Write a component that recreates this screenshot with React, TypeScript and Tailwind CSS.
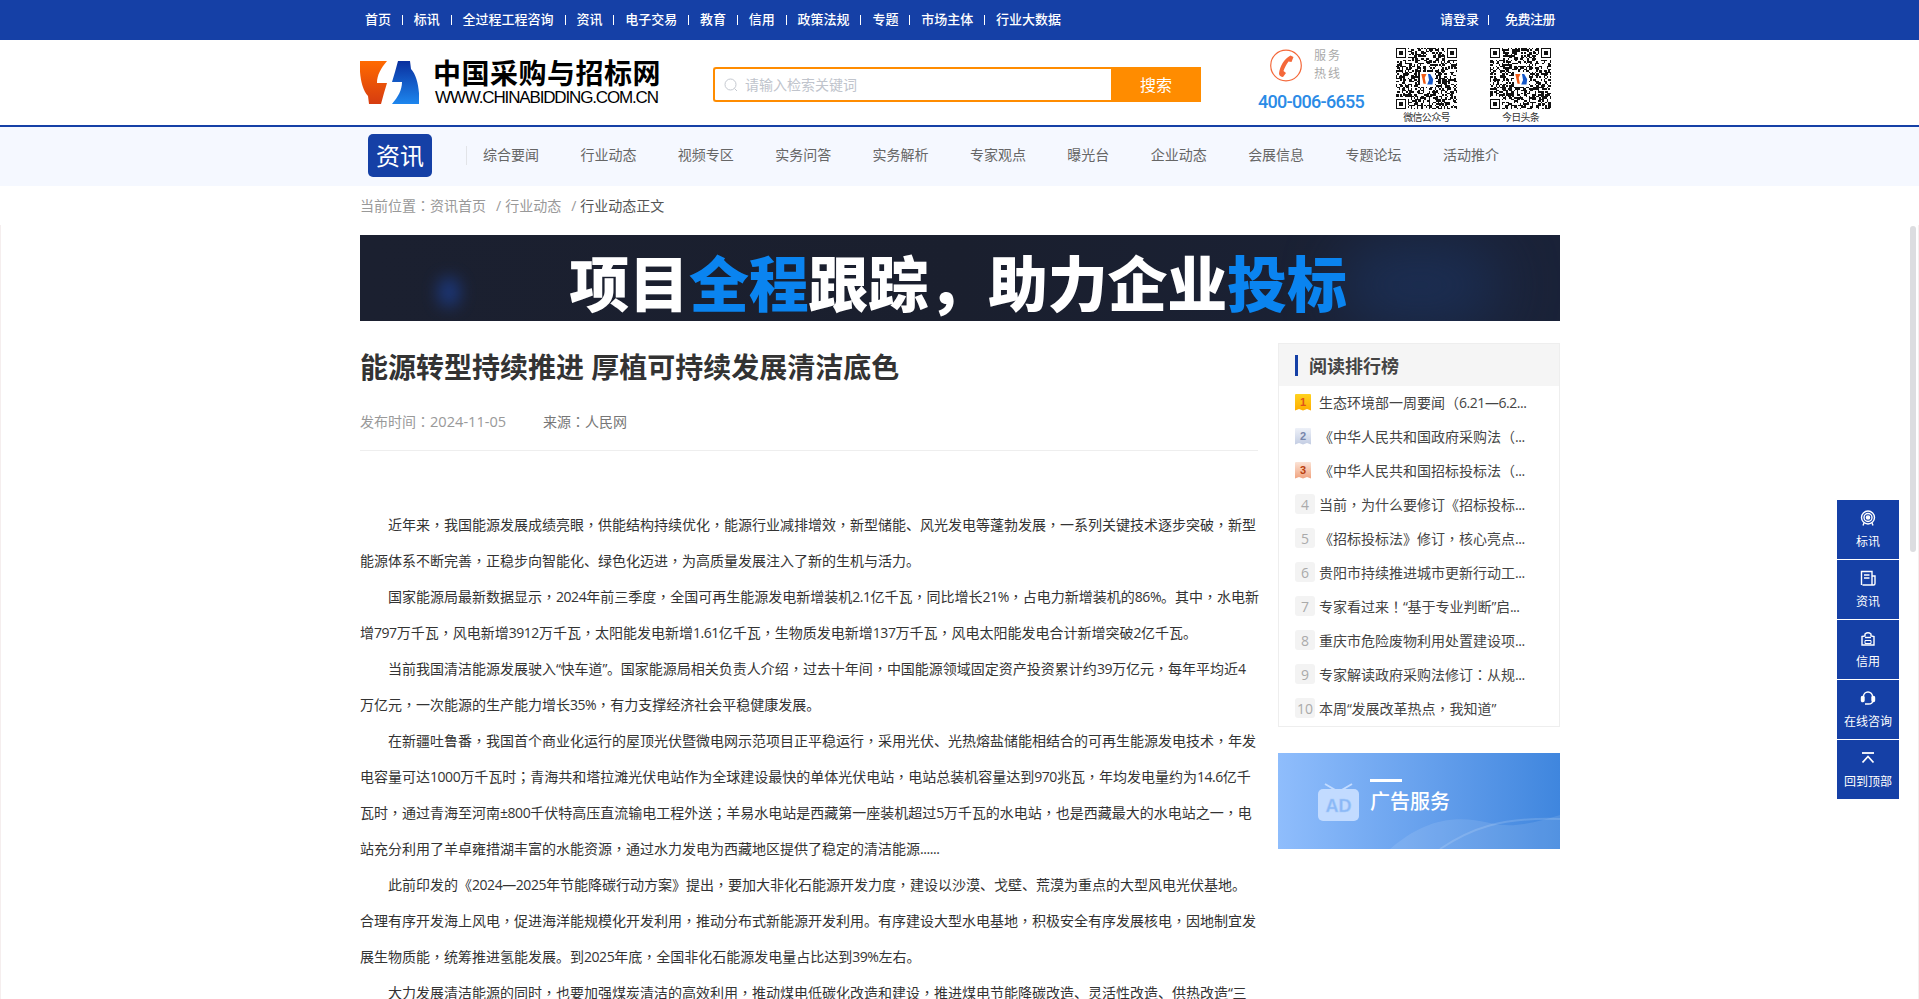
const F = "font-['Open_Sans','Noto_Sans_CJK_SC',sans-serif]";

const topNav = ["首页","标讯","全过程工程咨询","资讯","电子交易","教育","信用","政策法规","专题","市场主体","行业大数据"];
const subNav = ["综合要闻","行业动态","视频专区","实务问答","实务解析","专家观点","曝光台","企业动态","会展信息","专题论坛","活动推介"];
const ranking = [
  "生态环境部一周要闻（6.21—6.2...",
  "《中华人民共和国政府采购法（...",
  "《中华人民共和国招标投标法（...",
  "当前，为什么要修订《招标投标...",
  "《招标投标法》修订，核心亮点...",
  "贵阳市持续推进城市更新行动工...",
  "专家看过来！“基于专业判断”启...",
  "重庆市危险废物利用处置建设项...",
  "专家解读政府采购法修订：从规...",
  "本周“发展改革热点，我知道”",
];
const article: [string, boolean][] = [
  ["近年来，我国能源发展成绩亮眼，供能结构持续优化，能源行业减排增效，新型储能、风光发电等蓬勃发展，一系列关键技术逐步突破，新型", true],
  ["能源体系不断完善，正稳步向智能化、绿色化迈进，为高质量发展注入了新的生机与活力。", false],
  ["国家能源局最新数据显示，2024年前三季度，全国可再生能源发电新增装机2.1亿千瓦，同比增长21%，占电力新增装机的86%。其中，水电新", true],
  ["增797万千瓦，风电新增3912万千瓦，太阳能发电新增1.61亿千瓦，生物质发电新增137万千瓦，风电太阳能发电合计新增突破2亿千瓦。", false],
  ["当前我国清洁能源发展驶入“快车道”。国家能源局相关负责人介绍，过去十年间，中国能源领域固定资产投资累计约39万亿元，每年平均近4", true],
  ["万亿元，一次能源的生产能力增长35%，有力支撑经济社会平稳健康发展。", false],
  ["在新疆吐鲁番，我国首个商业化运行的屋顶光伏暨微电网示范项目正平稳运行，采用光伏、光热熔盐储能相结合的可再生能源发电技术，年发", true],
  ["电容量可达1000万千瓦时；青海共和塔拉滩光伏电站作为全球建设最快的单体光伏电站，电站总装机容量达到970兆瓦，年均发电量约为14.6亿千", false],
  ["瓦时，通过青海至河南±800千伏特高压直流输电工程外送；羊易水电站是西藏第一座装机超过5万千瓦的水电站，也是西藏最大的水电站之一，电", false],
  ["站充分利用了羊卓雍措湖丰富的水能资源，通过水力发电为西藏地区提供了稳定的清洁能源......", false],
  ["此前印发的《2024—2025年节能降碳行动方案》提出，要加大非化石能源开发力度，建设以沙漠、戈壁、荒漠为重点的大型风电光伏基地。", true],
  ["合理有序开发海上风电，促进海洋能规模化开发利用，推动分布式新能源开发利用。有序建设大型水电基地，积极安全有序发展核电，因地制宜发", false],
  ["展生物质能，统筹推进氢能发展。到2025年底，全国非化石能源发电量占比达到39%左右。", false],
  ["大力发展清洁能源的同时，也要加强煤炭清洁的高效利用，推动煤电低碳化改造和建设，推进煤电节能降碳改造、灵活性改造、供热改造“三", true],
];

function T({ s }: { s: string }) {
  return (
    <>
      {s.split(/([\x20-\x7e±—“”]+|[，：；！])/).map((part, i) => {
        if (!part) return null;
        if (/^[，：；！]$/.test(part)) return <span key={i} className="font-['Noto_Sans_CJK_TC',sans-serif]">{part}</span>;
        if (i % 2 === 1) return <span key={i} className="tracking-[-0.45px]">{part}</span>;
        return <span key={i}>{part}</span>;
      })}
    </>
  );
}

function Logo() {
  const d = "M0 1 H27 C21 8 17 15 17 23 H27 L24 33 L21 44 H9 L8 36 C2 30 -1 15 0 1Z";
  return (
    <svg width="59" height="45" viewBox="0 0 59 45" className="shrink-0">
      <defs>
        <linearGradient id="lo" x1="0" y1="0" x2="0" y2="1"><stop offset="0" stopColor="#ff6a00" /><stop offset="1" stopColor="#d63c10" /></linearGradient>
        <linearGradient id="lb" x1="0" y1="0" x2="0" y2="1"><stop offset="0" stopColor="#1d86ee" /><stop offset="1" stopColor="#0a2f9e" /></linearGradient>
      </defs>
      <path d={d} fill="url(#lo)" />
      <path d={d} fill="url(#lb)" transform="rotate(180 29.500 22.500)" />
    </svg>
  );
}

function QR({ seed }: { seed: number }) {
  const n = 41;
  const dark = "#111";
  const cells: JSX.Element[] = [];
  let s = seed;
  const inFinder = (x: number, y: number) => (x < 8 && y < 8) || (x >= n - 8 && y < 8) || (x < 8 && y >= n - 8);
  for (let y = 0; y < n; y++) {
    for (let x = 0; x < n; x++) {
      s = (s * 1103515245 + 12345) & 0x7fffffff;
      if (!inFinder(x, y) && ((s >> 16) & 7) < 4) cells.push(<rect key={x + "-" + y} x={x} y={y} width="1" height="1" fill={dark} />);
    }
  }
  const finder = (x: number, y: number) => (
    <g key={x + "_" + y}>
      <rect x={x} y={y} width="7" height="7" fill={dark} />
      <rect x={x + 1} y={y + 1} width="5" height="5" fill="#fff" />
      <rect x={x + 2} y={y + 2} width="3" height="3" fill={dark} />
    </g>
  );
  return (
    <svg width="61" height="61" viewBox="0 0 41 41" shapeRendering="crispEdges">
      <rect width="41" height="41" fill="#fff" />
      {cells}
      {finder(0, 0)}
      {finder(34, 0)}
      {finder(0, 34)}
      <rect x="16" y="16" width="10" height="10" fill="#fff" />
      <path d="M17 17.500h3.500l-1.200 2.500.8 4H18.500z" fill="#f05a14" shapeRendering="auto" />
      <path d="M21.500 17.500h1.500l2 3.500-.5 3.500h-3.500l1.200-3z" fill="#1557c8" shapeRendering="auto" />
    </svg>
  );
}

function Ribbon({ n, from, to, text }: { n: number; from: string; to: string; text: string }) {
  return (
    <svg width="16" height="17" viewBox="0 0 16 17" className="shrink-0">
      <defs>
        <linearGradient id={"r" + n} x1="0" y1="0" x2="0" y2="1"><stop offset="0" stopColor={from} /><stop offset="1" stopColor={to} /></linearGradient>
      </defs>
      <path d="M1 0H15Q16 0 16 1V16.500L12 15L8 16.500L4 15L0 16.500V1Q0 0 1 0Z" fill={"url(#r" + n + ")"} />
      <text x="8" y="11.500" textAnchor="middle" fontSize="11" fontWeight="700" fontFamily="Liberation Sans" fill={text}>{n}</text>
    </svg>
  );
}

function SideIcon({ i }: { i: number }) {
  const p = { fill: "none", stroke: "#fff", strokeWidth: 1.4 };
  if (i === 0)
    return (
      <svg width="16" height="16" viewBox="0 0 16 16" {...p}>
        <circle cx="8" cy="7.500" r="6.500" /><circle cx="8" cy="7.500" r="4" /><circle cx="8" cy="7.500" r="1.600" fill="#fff" />
        <path d="M4 13l-1 2.500M12 13l1 2.500" />
      </svg>
    );
  if (i === 1)
    return (
      <svg width="16" height="16" viewBox="0 0 16 16" {...p}>
        <path d="M1.500 15V1.500H12V15H2.500M12 6H15V13.500Q15 15 13.500 15H12" /><path d="M4 5H9.500M4 8H9.500" />
      </svg>
    );
  if (i === 2)
    return (
      <svg width="16" height="15" viewBox="0 0 16 15" {...p}>
        <path d="M2 5.500L5 5V3Q8 .5 11 3V5L14 5.500V14H2Z" /><path d="M5 6.500H11" /><path d="M5 9.500H11V12.500H5Z" strokeWidth="1" />
      </svg>
    );
  if (i === 3)
    return (
      <svg width="16" height="16" viewBox="0 0 16 16" {...p}>
        <path d="M3.500 8V6.500A4.500 4.500 0 0 1 12.500 6.500V8" />
        <rect x="1.500" y="6.500" width="2.500" height="5" rx="1" fill="#fff" /><rect x="12" y="6.500" width="2.500" height="5" rx="1" fill="#fff" />
        <path d="M5 14H8.500Q12.500 14 12.800 11" />
      </svg>
    );
  return (
    <svg width="16" height="12" viewBox="0 0 16 12" fill="none" stroke="#fff" strokeWidth="1.800">
      <path d="M2 1H14" /><path d="M2.500 10.500L8 4.500L13.500 10.500" />
    </svg>
  );
}

export default function App() {
  return (
    <div className={`${F} h-screen overflow-hidden bg-white flex flex-col`}>
      <div className="shrink-0">
        <div className="h-10 bg-[#1540a6] text-white text-[13px] font-medium">
          <div className="w-[1200px] ml-[360px] h-full flex items-center justify-between pl-[5px] pr-[5px]">
            <div className="flex items-center gap-[10.9px]">
              {topNav.map((t, i) => (
                <div key={t} className="flex items-center gap-[10.9px]">
                  {i > 0 && <span className="w-px h-[10px] bg-white" />}
                  <span>{t}</span>
                </div>
              ))}
            </div>
            <div className="flex items-center">
              <span>请登录</span>
              <span className="w-px h-[10px] bg-white ml-[9px] mr-[16px]" />
              <span className="tracking-[-0.5px]">免费注册</span>
            </div>
          </div>
        </div>

        <div className="h-[85px] flex items-start">
          <div className="w-[1200px] ml-[360px] flex items-start">
            <div className="flex items-start mt-[20px] w-[353px]">
              <Logo />
              <div className="ml-[14px] -mt-[2px] text-black">
                <div className="text-[28px] font-bold leading-[31px] tracking-[0.5px] whitespace-nowrap">中国采购与招标网</div>
                <div className="text-[17px] leading-[18px] tracking-[-1.15px] ml-[2px] font-['Liberation_Sans',sans-serif] whitespace-nowrap">WWW.CHINABIDDING.COM.CN</div>
              </div>
            </div>
            <div className="flex mt-[27px] h-[35px] w-[488px]">
              <div className="flex-1 border-2 border-[#ff8c00] rounded-l-[3px] border-r-0 flex items-center pl-[9px]">
                <svg width="14" height="14" viewBox="0 0 14 14" fill="none" stroke="#c5c9d0" strokeWidth="1"><circle cx="6.500" cy="6.500" r="5.500" /><path d="M10.500 10.500L13 13" /></svg>
                <span className="ml-[7px] text-[14px] text-[#c0c4cc]">请输入检索关键词</span>
              </div>
              <div className="w-[90px] bg-[#ff8c00] text-white text-[16px] flex items-center justify-center">搜索</div>
            </div>
            <div className="ml-[57px] mt-[7px] w-[138px] flex flex-col">
              <div className="flex items-center ml-[12px] gap-[12px]">
                <svg width="32" height="33" viewBox="0 0 32 33" fill="none">
                  <circle cx="16" cy="16.500" r="15.300" stroke="#f4683a" strokeWidth="1.200" />
                  <path d="M20.500 6.500L23.500 8L21.500 13L18.500 12.500C16 16 14.500 19 13.500 22L16 24L13 28C11 28 9 26.500 9 24.500C10 17 14 10 20.500 6.500Z" fill="#f4683a" />
                </svg>
                <div className="text-[12px] leading-[18px] text-[#aaa] tracking-[2px]"><div>服务</div><div>热线</div></div>
              </div>
              <div className="mt-[9px] text-[18px] leading-[20px] font-['Roboto',sans-serif] font-medium tracking-[-0.7px] text-[#2b8be6] whitespace-nowrap">400-006-6655</div>
            </div>
            <div className="mt-[8px] w-[94px] flex flex-col items-start">
              <QR seed={17} />
              <div className="w-[61px] text-center text-[10px] leading-[14px] text-[#333] tracking-[-0.7px] whitespace-nowrap mt-[1px]">微信公众号</div>
            </div>
            <div className="mt-[8px] w-[61px] flex flex-col items-start">
              <QR seed={91} />
              <div className="w-[61px] text-center text-[10px] leading-[14px] text-[#333] tracking-[-0.7px] whitespace-nowrap mt-[1px]">今日头条</div>
            </div>
          </div>
        </div>

        <div className="h-[61px] border-t-2 border-[#1540a6] bg-[#f5f8ff]">
          <div className="w-[1200px] ml-[360px] h-full flex items-center pl-[8px]">
            <div className="w-[64px] h-[43px] -mt-[2px] bg-[#1540a6] rounded-[5px] text-white text-[24px] flex items-center justify-center">资讯</div>
            <div className="w-px h-[19px] bg-[#e2e4e8] ml-[34px] -mt-[2px]" />
            <div className="flex ml-[16px] gap-[41.4px] text-[14px] text-[#666] -mt-[5px] whitespace-nowrap">
              {subNav.map((t) => <span key={t}>{t}</span>)}
            </div>
          </div>
        </div>

        <div className="h-[39px] flex items-center">
          <div className="ml-[360px] text-[14px] text-[#999] flex items-center">
            <span><T s="当前位置：资讯首页" /></span>
            <span className="ml-[10px] mr-[4px]">/</span>
            <span>行业动态</span>
            <span className="ml-[10px] mr-[4px]">/</span>
            <span className="text-[#555]">行业动态正文</span>
          </div>
        </div>
      </div>

      <div className="flex-1 min-h-0 overflow-hidden border-l border-r border-[#f5eeee]">
        <div className="w-[1200px] ml-[359px] pt-[10px]">
          <div className="relative h-[86px] bg-gradient-to-r from-[#1b2030] via-[#1a1f2e] to-[#1a2238] flex items-center justify-center text-white text-[60px] leading-[60px] font-black tracking-[-0.2px] whitespace-nowrap pr-[4px] pt-[12px]">
            <div className="absolute inset-0 overflow-hidden">
              <div className="absolute left-[78px] top-[42px] w-[22px] h-[30px] rounded-full bg-[#1d46a8] blur-[8px] opacity-60" />
              <div className="absolute right-[60px] top-[10px] w-[160px] h-[80px] rounded-full bg-[#1c3768] blur-[30px] opacity-60" />
            </div>
            <span className="relative">项目<span className="text-[#0a84f0]">全程</span>跟踪，助力企业<span className="text-[#0a84f0]">投标</span></span>
          </div>

          <div className="flex justify-between mt-[22px]">
            <div className="w-[898px]">
              <h1 className="h-[50px] text-[28px] font-bold leading-[48px] text-[#333] whitespace-nowrap">能源转型持续推进 厚植可持续发展清洁底色</h1>
              <div className="flex mt-[18px] h-[40px] border-b border-[#eeeeee] text-[14px] leading-[20px]">
                <span className="text-[#999] w-[183px]"><span className="font-['Noto_Sans_CJK_TC',sans-serif]">发布时间：</span><span className="text-[14.600px]">2024-11-05</span></span>
                <span className="text-[#777]"><T s="来源：人民网" /></span>
              </div>
              <div className="mt-[55px] text-[14px] leading-[36px] text-[#333]">
                {article.map(([line, indent]) => (
                  <div key={line} className={indent ? "h-[36px] pl-[28px] whitespace-nowrap" : "h-[36px] whitespace-nowrap"}><T s={line} /></div>
                ))}
              </div>
            </div>

            <div className="w-[282px]">
              <div className="border border-[#eeeeee] h-[384px] box-border">
                <div className="h-[42px] bg-[#f5f5f5] flex items-center pl-[16px]">
                  <span className="w-[3px] h-[21px] bg-[#1540a6]" />
                  <span className="ml-[11px] mt-[2px] text-[18px] font-bold text-[#444]">阅读排行榜</span>
                </div>
                {ranking.map((t, i) => (
                  <div key={t} className="h-[34px] pb-[2px] flex items-center pl-[16px] text-[14px] text-[#444] whitespace-nowrap">
                    {i === 0 && <Ribbon n={1} from="#ffd21f" to="#ffae00" text="#e0521a" />}
                    {i === 1 && <Ribbon n={2} from="#eef1f8" to="#c3cde3" text="#7785aa" />}
                    {i === 2 && <Ribbon n={3} from="#fbe3d6" to="#f0a37f" text="#b9400f" />}
                    {i > 2 && <span className="w-[20px] h-[20px] shrink-0 rounded-[3px] bg-[#f3f3f3] text-[#aaa] text-[14px] flex items-center justify-center">{i + 1}</span>}
                    <span className={i < 3 ? "ml-[8px]" : "ml-[4px]"}><T s={t} /></span>
                  </div>
                ))}
              </div>

              <div className="relative mt-[26px] h-[96px] bg-gradient-to-r from-[#8fbdfc] to-[#3f86de] overflow-hidden flex items-center pl-[40px]">
                <div className="absolute inset-y-0 right-0 w-[180px] bg-[radial-gradient(#ffffff2e_0.6px,transparent_0.6px)] bg-[length:4px_4px]" />
                <svg width="41" height="38" viewBox="0 0 41 38" className="relative shrink-0 mt-[1px]">
                  <path d="M7 1L19 8M34 1L22 8" stroke="#c2dbff" strokeWidth="2" />
                  <rect y="6" width="41" height="32" rx="5" fill="#c2dbff" />
                  <text x="20.500" y="29" textAnchor="middle" fontSize="18" fontWeight="700" fontFamily="Liberation Sans" fill="#8ab8f6" stroke="#a9cbfb" strokeWidth="0.5">AD</text>
                </svg>
                <div className="relative z-10 ml-[11px] text-white -mt-[9px]">
                  <div className="w-[32px] h-[3px] bg-white" />
                  <div className="mt-[7px] text-[20px] leading-[26px] font-medium whitespace-nowrap">广告服务</div>
                </div>
                <svg className="absolute right-0 bottom-0" width="170" height="34" viewBox="0 0 170 34" fill="none">
                  <path d="M0 34C30 8 60 -2 100 8C125 14 150 6 170 0V34Z" fill="#ffffff" fillOpacity="0.1" />
                  <path d="M50 34C80 14 110 2 170 4" stroke="#ffffff" strokeOpacity="0.15" strokeWidth="2" />
                </svg>
              </div>
            </div>
          </div>
        </div>
      </div>

      <div className="absolute top-[226px] left-[1910px] w-[6px] h-[326px] rounded-[3px] bg-[#dcdde0]" />

      <div className="absolute top-[500px] left-[1837px] w-[62px] flex flex-col gap-px">
        {["标讯","资讯","信用","在线咨询","回到顶部"].map((t, i) => (
          <div key={t} className="h-[59px] bg-[#1540a6] text-white flex flex-col items-center pt-[10px]">
            <div className="h-[16px] flex items-center"><SideIcon i={i} /></div>
            <div className="mt-[8px] text-[12px] leading-[16px] whitespace-nowrap">{t}</div>
          </div>
        ))}
      </div>
    </div>
  );
}
